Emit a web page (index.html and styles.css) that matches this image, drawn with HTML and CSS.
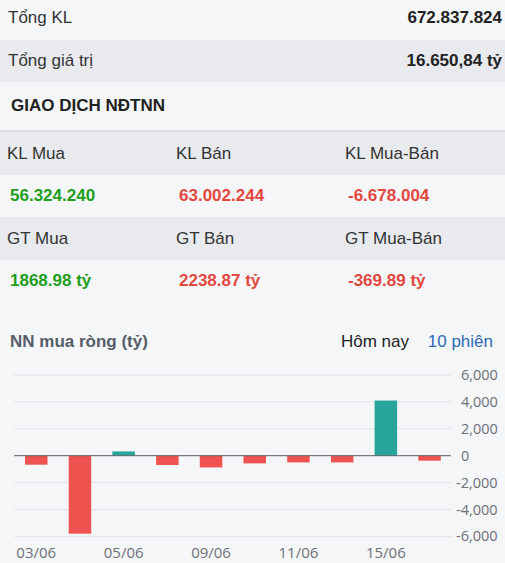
FILE: index.html
```html
<!DOCTYPE html>
<html lang="vi">
  <head>
    <meta charset="UTF-8" />
    <meta name="viewport" content="width=device-width, initial-scale=1.0" />
    <title>Giao dịch NĐTNN</title>
    <link rel="stylesheet" href="styles.css">
  </head>
  <body>
    <div class="panel">
      <!-- tổng quan -->
      <div class="sum-row">
        <span>Tổng KL</span>
        <b>672.837.824</b>
      </div>
      <div class="sum-row alt">
        <span>Tổng giá trị</span>
        <b>16.650,84 tỷ</b>
      </div>

      <h2 class="section-title">GIAO DỊCH NĐTNN</h2>

      <!-- bảng mua bán -->
      <div class="trade-grid">
        <div class="grid-row head">
          <div>KL Mua</div>
          <div>KL Bán</div>
          <div>KL Mua-Bán</div>
        </div>
        <div class="grid-row vals">
          <div class="up">56.324.240</div>
          <div class="down">63.002.244</div>
          <div class="down">-6.678.004</div>
        </div>
        <div class="grid-row head">
          <div>GT Mua</div>
          <div>GT Bán</div>
          <div>GT Mua-Bán</div>
        </div>
        <div class="grid-row vals">
          <div class="up">1868.98 tỷ</div>
          <div class="down">2238.87 tỷ</div>
          <div class="down">-369.89 tỷ</div>
        </div>
      </div>

      <!-- biểu đồ -->
      <div class="chart-head">
        <h3>NN mua ròng (tỷ)</h3>
        <div class="tabs">
          <span>Hôm nay</span>
          <span class="active">10 phiên</span>
        </div>
      </div>
      <svg class="chart" id="chart" width="505" height="203" viewBox="0 0 505 203"></svg>
    </div>

    <script>
      // dữ liệu 10 phiên (tỷ)
      const data = [
        ["03/06", -670], ["04/06", -5800], ["05/06", 320], ["06/06", -690],
        ["09/06", -870], ["10/06", -570], ["11/06", -500], ["12/06", -500],
        ["15/06", 4100], ["16/06", -369.89]
      ];
      const chart = document.getElementById("chart");
      const gLeft = 14, gRight = 451, gTop = 13, step = 26.9;
      const zero = gTop + step * 3;
      const scale = step / 2000;
      const slot = (gRight - gLeft) / data.length;
      let html = "";

      // lưới + nhãn trục
      for (let i = 0; i <= 6; i++) {
        const v = 6000 - i * 2000;
        const y = gTop + i * step;
        if (v !== 0) html += `<line class="grid" x1="${gLeft}" x2="${gRight}" y1="${y}" y2="${y}"/>`;
        const label = v.toLocaleString("en-US");
        const x = v < 0 ? 456 : 461;
        html += `<text class="ylab" x="${x}" y="${y + 5}">${label}</text>`;
      }

      data.forEach(([day, val], i) => {
        const x = gLeft + i * slot + 11;
        const h = Math.abs(val) * scale;
        const y = val >= 0 ? zero - h : zero;
        html += `<rect class="${val >= 0 ? "pos" : "neg"}" x="${x}" y="${y}" width="22.5" height="${h}"/>`;
        if (i % 2 === 0) {
          html += `<text class="xlab" x="${x + 11.25}" y="196">${day}</text>`;
        }
      });
      html += `<line class="zero" x1="${gLeft}" x2="${gRight}" y1="${zero}" y2="${zero}"/>`;
      chart.innerHTML = html;
    </script>
  </body>
</html>
```

FILE: styles.css
```css
/* cơ bản */
body {
  margin: 0;
  padding: 0;
  background-color: #f5f6f8;
  font-family: "Liberation Sans", Arial, sans-serif;
  font-size: 17px;
  color: #333;
}
.panel {
  width: 505px;
}
/* tổng quan */
.sum-row {
  display: flex;
  justify-content: space-between;
  align-items: center;
  height: 40px;
  padding: 0 3px 0 8px;
  margin-top: -2px;
}
.sum-row.alt {
  margin-top: 2px;
  height: 42px;
  background-color: #e8eaee;
}
.sum-row b {
  color: #222;
}
.section-title {
  margin: 0;
  height: 48px;
  line-height: 48px;
  padding-left: 11px;
  font-size: 17px;
  color: #222;
}
/* bảng mua bán */
.trade-grid {
  border-top: 2px solid #dcdfe4;
}
.grid-row {
  display: grid;
  grid-template-columns: 169px 169px 1fr;
  align-items: center;
}
.grid-row.head {
  height: 43px;
  background-color: #e8eaee;
  padding-left: 7px;
}
.grid-row.vals {
  height: 42px;
  padding-left: 10px;
  font-weight: bold;
}
.up {
  color: #1f9e1c;
}
.down {
  color: #e2483f;
}
/* biểu đồ */
.chart-head {
  display: flex;
  justify-content: space-between;
  align-items: center;
  margin-top: 20px;
  height: 40px;
  padding: 0 12px 0 10px;
}
.chart-head h3 {
  margin: 0;
  font-size: 17px;
  color: #555d69;
}
.tabs span {
  color: #222;
}
.tabs .active {
  margin-left: 14px;
  color: #2e6bb5;
}
.chart {
  display: block;
}
.chart .grid {
  stroke: #e0e3e8;
  stroke-width: 1;
}
.chart .zero {
  stroke: #5c5f66;
  stroke-width: 1;
}
.chart .pos {
  fill: #26a69a;
}
.chart .neg {
  fill: #ef5350;
}
.chart .ylab,
.chart .xlab {
  font-family: "Open Sans", sans-serif;
  font-size: 14.5px;
  fill: #6e7079;
}
.chart .xlab {
  font-size: 15px;
  text-anchor: middle;
}
```
